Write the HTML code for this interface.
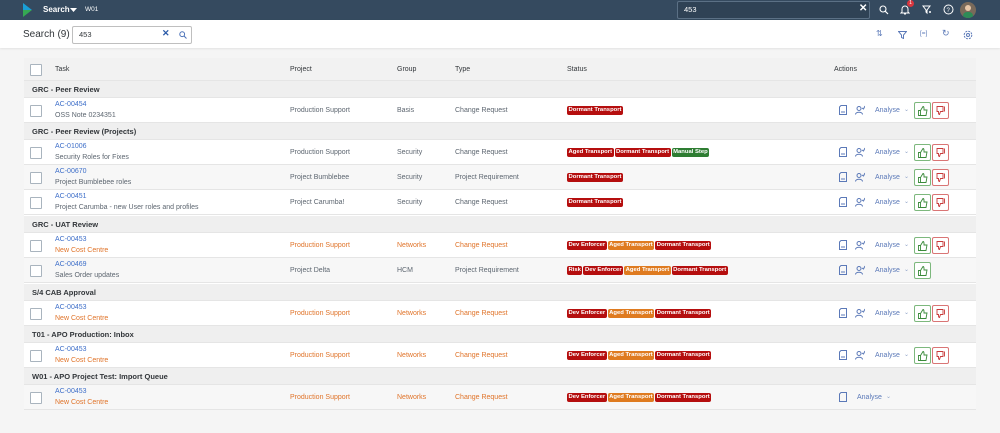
<!DOCTYPE html>
<html><head><meta charset="utf-8"><style>
*{margin:0;padding:0;box-sizing:border-box}
body{width:1000px;height:428px;background:#f5f5f5;font-family:"Liberation Sans",Arial,sans-serif;position:relative;overflow:hidden;color:#32363a}
.shell{position:absolute;left:0;top:0;width:1000px;height:20px;background:#354a5f}
.hdr{position:absolute;left:0;top:20px;width:1000px;height:28px;background:#fff;box-shadow:0 1px 2px rgba(0,0,0,.08)}
.a{position:absolute;white-space:nowrap}
.tbl{position:absolute;left:24px;top:58px;width:952px;height:352px;background:#fff}
.row{position:absolute;left:0;width:952px;border-bottom:1px solid #e5e5e5}
.grp{background:#efefef;height:17px}
.grp span{position:absolute;left:8px;top:4px;font-size:7.5px;font-weight:bold;color:#32363a}
.dr{height:25px}
.w{background:#fff}.g{background:#f7f7f7}
.cb{position:absolute;left:6px;top:7px;width:12px;height:12px;border:1px solid #a9b4be;background:#fff;border-radius:1px}
.t{font-size:7px}
.lnk{color:#3e6fc9}
.or{color:#e0742a}
.gr{color:#5d6670}
.tag{display:inline-block;height:9px;line-height:9px;font-size:5.9px;font-weight:bold;color:#fff;padding:0 1.5px;border-radius:2px;margin-right:1px;vertical-align:top}
.rd{background:#b50e0e}.og{background:#df7b20}.gn{background:#2e7d32}
.btn{position:absolute;top:4px;width:17px;height:17px;border-radius:2px;background:#fff}
.up{border:1px solid #7db87d}.dn{border:1px solid #d97575}
</style></head><body>
<div class="shell">
<svg class="a" style="left:23px;top:3px" width="10" height="15"><polygon points="0,0 9,7 0,7" fill="#1a9fd6"/><polygon points="0,7 9,7 0,14" fill="#35a853"/></svg>
<span class="a" style="left:43px;top:5px;font-size:8px;font-weight:bold;color:#fff">Search</span>
<svg class="a" style="left:70px;top:8px" width="7" height="5"><polygon points="0,0 7,0 3.5,4" fill="#fff"/></svg>
<span class="a" style="left:85px;top:6px;font-size:6.5px;color:#fff">W01</span>
<div class="a" style="left:677px;top:1px;width:193px;height:18px;border:1px solid #5b7085;border-radius:2px;background:#2f4255"></div>
<span class="a" style="left:684px;top:5px;font-size:7.5px;color:#fff">453</span>
<span class="a" style="left:859px;top:3px;font-size:10px;color:#fff;font-weight:bold">✕</span>
<svg class="a" style="left:879px;top:5px" width="10" height="10"><circle cx="4" cy="4" r="3" stroke="#fff" fill="none" stroke-width="1.1"/><line x1="6.3" y1="6.3" x2="9" y2="9" stroke="#fff" stroke-width="1.2"/></svg>
<svg class="a" style="left:900px;top:4px" width="10" height="12"><path d="M2 8V5a3 3 0 016 0v3l1 1H1z" stroke="#fff" fill="none"/><path d="M4 10h2" stroke="#fff"/></svg>
<div class="a" style="left:907px;top:0;width:7px;height:7px;border-radius:50%;background:#d9363e;font-size:5px;color:#fff;text-align:center;line-height:7px">1</div>
<svg class="a" style="left:922px;top:5px" width="10" height="10"><path d="M1 1h7L5 5v3L4 7V5z" stroke="#fff" fill="none"/><path d="M7 7h2M8 6v2" stroke="#fff"/></svg>
<svg class="a" style="left:943px;top:4px" width="11" height="11"><circle cx="5.5" cy="5.5" r="4.5" stroke="#fff" fill="none"/><text x="3.5" y="8" font-size="6" fill="#fff" font-family="Liberation Sans">?</text></svg>
<div class="a" style="left:960px;top:2px;width:16px;height:16px;border-radius:50%;background:#7a6a5a;overflow:hidden"><div style="position:absolute;left:5px;top:3px;width:6px;height:6px;border-radius:50%;background:#e8c7a8"></div><div style="position:absolute;left:3px;top:10px;width:10px;height:7px;border-radius:4px 4px 0 0;background:#2e8b57"></div></div>
</div>
<div class="hdr">
<span class="a" style="left:23px;top:9px;font-size:10px;color:#32363a">Search (9)</span>
<div class="a" style="left:72px;top:6px;width:120px;height:18px;border:1px solid #bfbfbf;border-radius:2px;background:#fff"></div>
<span class="a" style="left:79px;top:10px;font-size:7.5px">453</span>
<span class="a" style="left:162px;top:8px;font-size:9px;color:#2a5aa8;font-weight:bold">✕</span>
<svg class="a" style="left:179px;top:11px" width="8" height="8"><circle cx="3.2" cy="3.2" r="2.4" stroke="#4b72b8" fill="none"/><line x1="5" y1="5" x2="7.5" y2="7.5" stroke="#4b72b8"/></svg>
<span class="a" style="left:876px;top:9px;font-size:8px;color:#5b79b8">⇅</span>
<svg class="a" style="left:898px;top:11px" width="9" height="8"><path d="M.5 .5h8L5.5 4v3.5L3.5 6.5V4z" stroke="#5b79b8" fill="none"/></svg>
<span class="a" style="left:920px;top:10px;font-size:6.5px;color:#5b79b8">[=]</span>
<span class="a" style="left:942px;top:8px;font-size:9px;color:#5b79b8">↻</span>
<svg class="a" style="left:963px;top:10px" width="10" height="10"><circle cx="5" cy="5" r="3.8" stroke="#5b79b8" fill="none" stroke-dasharray="2 1"/><circle cx="5" cy="5" r="1.5" stroke="#5b79b8" fill="none"/></svg>
</div>

<div class="tbl">
<div class="row" style="top:0;height:23px;background:#f2f2f2"><div class="cb" style="top:6px"></div>
<span class="a t" style="left:31px;top:8px">Task</span><span class="a t" style="left:266px;top:8px">Project</span><span class="a t" style="left:373px;top:8px">Group</span><span class="a t" style="left:431px;top:8px">Type</span><span class="a t" style="left:543px;top:8px">Status</span><span class="a t" style="left:810px;top:8px">Actions</span></div>
</div>

<div class="tbl" style="background:transparent;top:81px">
<div class="row grp" style="top:0"><span>GRC - Peer Review</span></div>
<div class="row dr w" style="top:17px"><div class="cb"></div><span class="a t lnk" style="left:31px;top:3px">AC-00454</span><span class="a t gr" style="left:31px;top:14px">OSS Note 0234351</span><span class="a t gr" style="left:266px;top:9px">Production Support</span><span class="a t gr" style="left:373px;top:9px">Basis</span><span class="a t gr" style="left:431px;top:9px">Change Request</span><span class="a" style="left:543px;top:8px"><span class="tag rd">Dormant Transport</span></span>ACT1</div>
<div class="row grp" style="top:42px"><span>GRC - Peer Review (Projects)</span></div>
<div class="row dr w" style="top:59px"><div class="cb"></div><span class="a t lnk" style="left:31px;top:3px">AC-01006</span><span class="a t gr" style="left:31px;top:14px">Security Roles for Fixes</span><span class="a t gr" style="left:266px;top:9px">Production Support</span><span class="a t gr" style="left:373px;top:9px">Security</span><span class="a t gr" style="left:431px;top:9px">Change Request</span><span class="a" style="left:543px;top:8px"><span class="tag rd">Aged Transport</span><span class="tag rd">Dormant Transport</span><span class="tag gn">Manual Step</span></span>ACT1</div>
<div class="row dr g" style="top:84px"><div class="cb"></div><span class="a t lnk" style="left:31px;top:3px">AC-00670</span><span class="a t gr" style="left:31px;top:14px">Project Bumblebee roles</span><span class="a t gr" style="left:266px;top:9px">Project Bumblebee</span><span class="a t gr" style="left:373px;top:9px">Security</span><span class="a t gr" style="left:431px;top:9px">Project Requirement</span><span class="a" style="left:543px;top:8px"><span class="tag rd">Dormant Transport</span></span>ACT1</div>
<div class="row dr w" style="top:109px"><div class="cb"></div><span class="a t lnk" style="left:31px;top:3px">AC-00451</span><span class="a t gr" style="left:31px;top:14px">Project Carumba - new User roles and profiles</span><span class="a t gr" style="left:266px;top:9px">Project Carumba!</span><span class="a t gr" style="left:373px;top:9px">Security</span><span class="a t gr" style="left:431px;top:9px">Change Request</span><span class="a" style="left:543px;top:8px"><span class="tag rd">Dormant Transport</span></span>ACT1</div>
<div class="row grp" style="top:135px"><span>GRC - UAT Review</span></div>
<div class="row dr w" style="top:152px"><div class="cb"></div><span class="a t lnk" style="left:31px;top:3px">AC-00453</span><span class="a t or" style="left:31px;top:14px">New Cost Centre</span><span class="a t or" style="left:266px;top:9px">Production Support</span><span class="a t or" style="left:373px;top:9px">Networks</span><span class="a t or" style="left:431px;top:9px">Change Request</span><span class="a" style="left:543px;top:8px"><span class="tag rd">Dev Enforcer</span><span class="tag og">Aged Transport</span><span class="tag rd">Dormant Transport</span></span>ACT1</div>
<div class="row dr g" style="top:177px"><div class="cb"></div><span class="a t lnk" style="left:31px;top:3px">AC-00469</span><span class="a t gr" style="left:31px;top:14px">Sales Order updates</span><span class="a t gr" style="left:266px;top:9px">Project Delta</span><span class="a t gr" style="left:373px;top:9px">HCM</span><span class="a t gr" style="left:431px;top:9px">Project Requirement</span><span class="a" style="left:543px;top:8px"><span class="tag rd">Risk</span><span class="tag rd">Dev Enforcer</span><span class="tag og">Aged Transport</span><span class="tag rd">Dormant Transport</span></span>ACT2</div>
<div class="row grp" style="top:203px"><span>S/4 CAB Approval</span></div>
<div class="row dr w" style="top:220px"><div class="cb"></div><span class="a t lnk" style="left:31px;top:3px">AC-00453</span><span class="a t or" style="left:31px;top:14px">New Cost Centre</span><span class="a t or" style="left:266px;top:9px">Production Support</span><span class="a t or" style="left:373px;top:9px">Networks</span><span class="a t or" style="left:431px;top:9px">Change Request</span><span class="a" style="left:543px;top:8px"><span class="tag rd">Dev Enforcer</span><span class="tag og">Aged Transport</span><span class="tag rd">Dormant Transport</span></span>ACT1</div>
<div class="row grp" style="top:245px"><span>T01 - APO Production: Inbox</span></div>
<div class="row dr w" style="top:262px"><div class="cb"></div><span class="a t lnk" style="left:31px;top:3px">AC-00453</span><span class="a t or" style="left:31px;top:14px">New Cost Centre</span><span class="a t or" style="left:266px;top:9px">Production Support</span><span class="a t or" style="left:373px;top:9px">Networks</span><span class="a t or" style="left:431px;top:9px">Change Request</span><span class="a" style="left:543px;top:8px"><span class="tag rd">Dev Enforcer</span><span class="tag og">Aged Transport</span><span class="tag rd">Dormant Transport</span></span>ACT1</div>
<div class="row grp" style="top:287px"><span>W01 - APO Project Test: Import Queue</span></div>
<div class="row dr g" style="top:304px"><div class="cb"></div><span class="a t lnk" style="left:31px;top:3px">AC-00453</span><span class="a t or" style="left:31px;top:14px">New Cost Centre</span><span class="a t or" style="left:266px;top:9px">Production Support</span><span class="a t or" style="left:373px;top:9px">Networks</span><span class="a t or" style="left:431px;top:9px">Change Request</span><span class="a" style="left:543px;top:8px"><span class="tag rd">Dev Enforcer</span><span class="tag og">Aged Transport</span><span class="tag rd">Dormant Transport</span></span>
<svg class="a" style="left:815px;top:7px" width="8" height="10"><path d="M2 .5h5.5v9H.5V2z" stroke="#5b79b8" fill="none"/></svg><span class="a t" style="left:833px;top:9px;color:#5b79b8">Analyse</span><span class="a" style="left:862px;top:8px;font-size:6px;color:#8fa3c8">⌄</span></div>
</div>
<script>
var A1='<svg class="a" style="left:815px;top:7px" width="8" height="10"><path d="M2 .5h5.5v9H.5V2z" stroke="#5b79b8" fill="none"/><path d="M2 7h4" stroke="#5b79b8"/></svg><svg class="a" style="left:831px;top:7px" width="10" height="10"><circle cx="4" cy="3.5" r="2" stroke="#5b79b8" fill="none"/><path d="M.5 9.5c0-3 7-3 7 0M7 3l1.5 1L10 1" stroke="#5b79b8" fill="none"/></svg><span class="a t" style="left:851px;top:9px;color:#5b79b8">Analyse</span><span class="a" style="left:880px;top:8px;font-size:6px;color:#8fa3c8">⌄</span><div class="btn up" style="left:890px"><svg style="position:absolute;left:3px;top:3px" width="10" height="10"><path d="M.5 4.5h2v5h-2zM2.5 4.5L5 .5c1 0 1 1 1 2V4h3l-1 5.5H2.5" stroke="#3a8a3a" fill="none" stroke-width=".9"/></svg></div>';
var DN='<div class="btn dn" style="left:908px"><svg style="position:absolute;left:3px;top:3px" width="10" height="10"><path d="M1 .5h6v5H4.5L3.5 8.5C2.5 8.5 2.5 7.5 2.5 6.5V5.5H1zM8.5 .5v5" stroke="#c83a3a" fill="none" stroke-width=".9"/></svg></div>';
document.querySelectorAll('.dr').forEach(function(r){var h=r.innerHTML;if(h.indexOf('ACT1')>=0)r.innerHTML=h.replace('ACT1',A1+DN);else if(h.indexOf('ACT2')>=0)r.innerHTML=h.replace('ACT2',A1);});
</script>
</body></html>
